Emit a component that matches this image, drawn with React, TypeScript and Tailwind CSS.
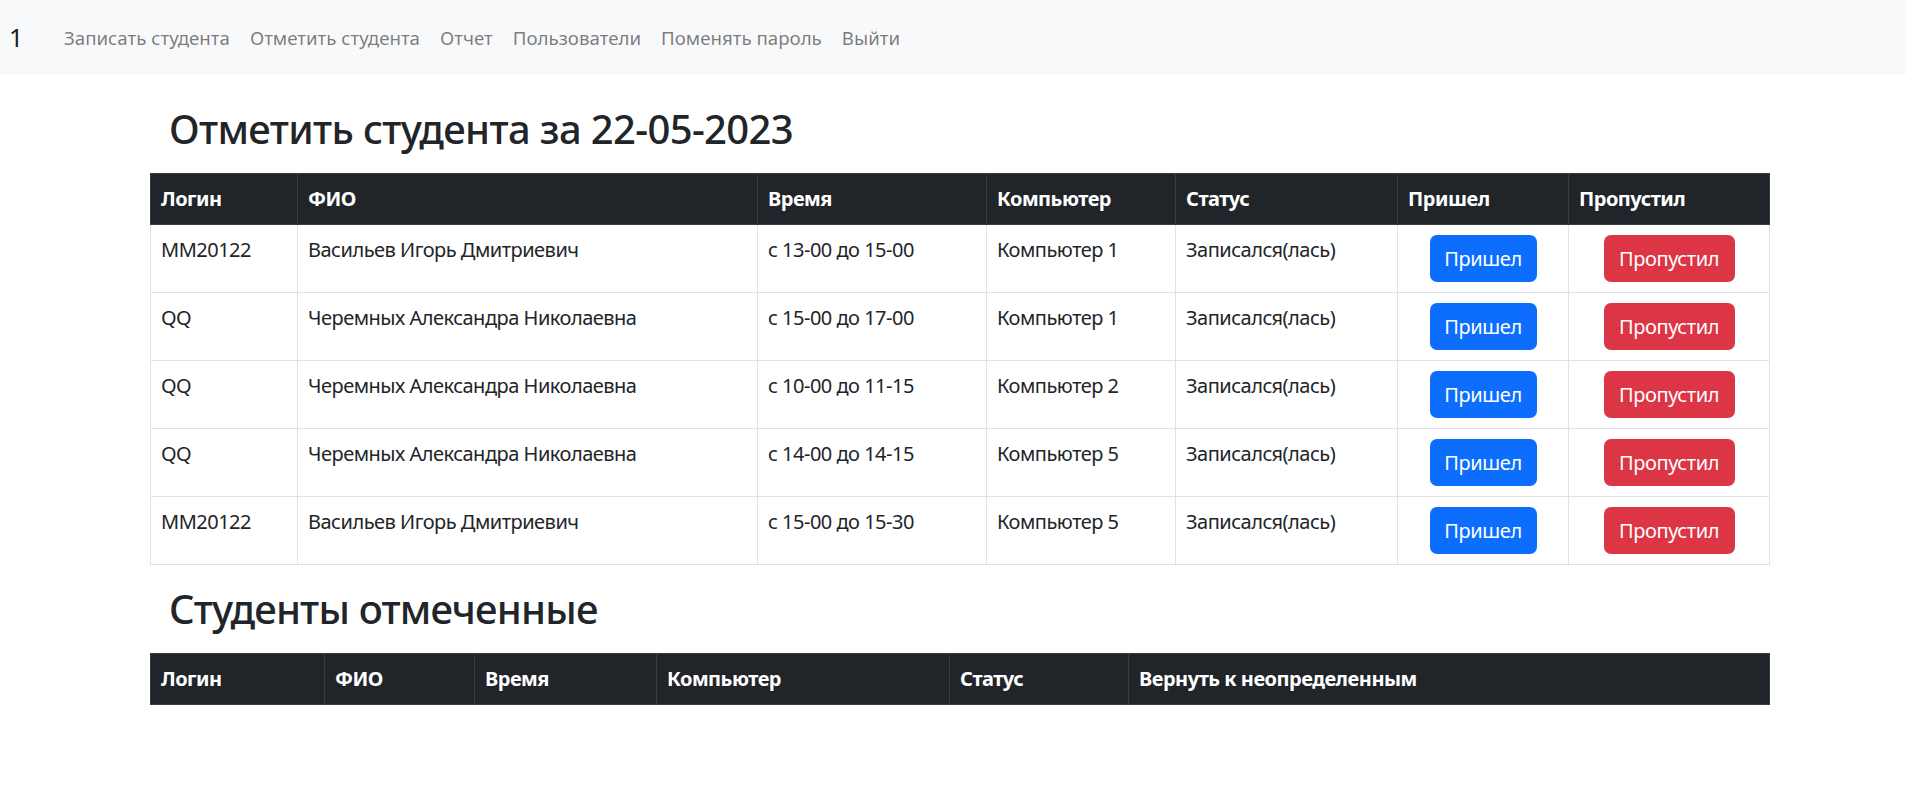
import React from "react";

const rows = [
  { login: "MM20122", fio: "Васильев Игорь Дмитриевич", time: "с 13-00 до 15-00", pc: "Компьютер 1" },
  { login: "QQ", fio: "Черемных Александра Николаевна", time: "с 15-00 до 17-00", pc: "Компьютер 1" },
  { login: "QQ", fio: "Черемных Александра Николаевна", time: "с 10-00 до 11-15", pc: "Компьютер 2" },
  { login: "QQ", fio: "Черемных Александра Николаевна", time: "с 14-00 до 14-15", pc: "Компьютер 5" },
  { login: "MM20122", fio: "Васильев Игорь Дмитриевич", time: "с 15-00 до 15-30", pc: "Компьютер 5" },
];

const navItems = ["Записать студента", "Отметить студента", "Отчет", "Пользователи", "Поменять пароль", "Выйти"];

const th = "border border-[#373b3e] px-[10px] py-[10px] text-left font-bold leading-[30px] tracking-[-0.025em] text-white";
const td = "border border-[#dee2e6] px-[10px] py-[10px] align-top leading-[30px] tracking-[-0.025em]";

export default function App() {
  return (
    <div className="min-h-[795px] bg-white font-['Noto_Sans',sans-serif] text-[20px] text-[#212529]">
      <nav className="flex h-[75px] items-center bg-[#f8f9fa] pl-[9px]">
        <span className="w-[45px] text-[25px] leading-[37px] text-[rgba(0,0,0,0.9)]">1</span>
        <ul className="flex">
          {navItems.map((n) => (
            <li key={n} className="px-[10px] text-[18.7px] leading-[30px] text-[rgba(0,0,0,0.52)]">
              {n}
            </li>
          ))}
        </ul>
      </nav>

      <main className="ml-[150px] w-[1619px] pt-[30px]">
        <h2 className="mb-[20px] pl-[19px] text-[40px] font-medium leading-[48px] tracking-[-0.016em]">Отметить студента за 22-05-2023</h2>
        <table className="mb-[20px] w-[1619px] table-fixed border-collapse">
          <colgroup>
            <col className="w-[147px]" />
            <col className="w-[460px]" />
            <col className="w-[229px]" />
            <col className="w-[189px]" />
            <col className="w-[222px]" />
            <col className="w-[171px]" />
            <col className="w-[201px]" />
          </colgroup>
          <thead className="bg-[#212529]">
            <tr>
              <th className={th}>Логин</th>
              <th className={th}>ФИО</th>
              <th className={th}>Время</th>
              <th className={th}>Компьютер</th>
              <th className={th}>Статус</th>
              <th className={th}>Пришел</th>
              <th className={th}>Пропустил</th>
            </tr>
          </thead>
          <tbody>
            {rows.map((r, i) => (
              <tr key={i}>
                <td className={td}>{r.login}</td>
                <td className={td}>{r.fio}</td>
                <td className={td}>{r.time}</td>
                <td className={td}>{r.pc}</td>
                <td className={td}>Записался(лась)</td>
                <td className={`${td} text-center`}>
                  <button className="inline-flex h-[47px] w-[107px] items-center justify-center rounded-[7px] bg-[#0d6efd] text-[20px] leading-[30px] tracking-[-0.02em] text-white">
                    Пришел
                  </button>
                </td>
                <td className={`${td} text-center`}>
                  <button className="inline-flex h-[47px] w-[131px] items-center justify-center rounded-[7px] bg-[#dc3545] text-[20px] leading-[30px] tracking-[-0.02em] text-white">
                    Пропустил
                  </button>
                </td>
              </tr>
            ))}
          </tbody>
        </table>

        <h2 className="mb-[20px] pl-[19px] text-[40px] font-medium leading-[48px] tracking-[-0.02em]">Студенты отмеченные</h2>
        <table className="w-[1619px] table-fixed border-collapse">
          <colgroup>
            <col className="w-[174px]" />
            <col className="w-[150px]" />
            <col className="w-[182px]" />
            <col className="w-[293px]" />
            <col className="w-[179px]" />
            <col className="w-[641px]" />
          </colgroup>
          <thead className="bg-[#212529]">
            <tr>
              <th className={th}>Логин</th>
              <th className={th}>ФИО</th>
              <th className={th}>Время</th>
              <th className={th}>Компьютер</th>
              <th className={th}>Статус</th>
              <th className={th}>Вернуть к неопределенным</th>
            </tr>
          </thead>
          <tbody></tbody>
        </table>
      </main>
    </div>
  );
}
